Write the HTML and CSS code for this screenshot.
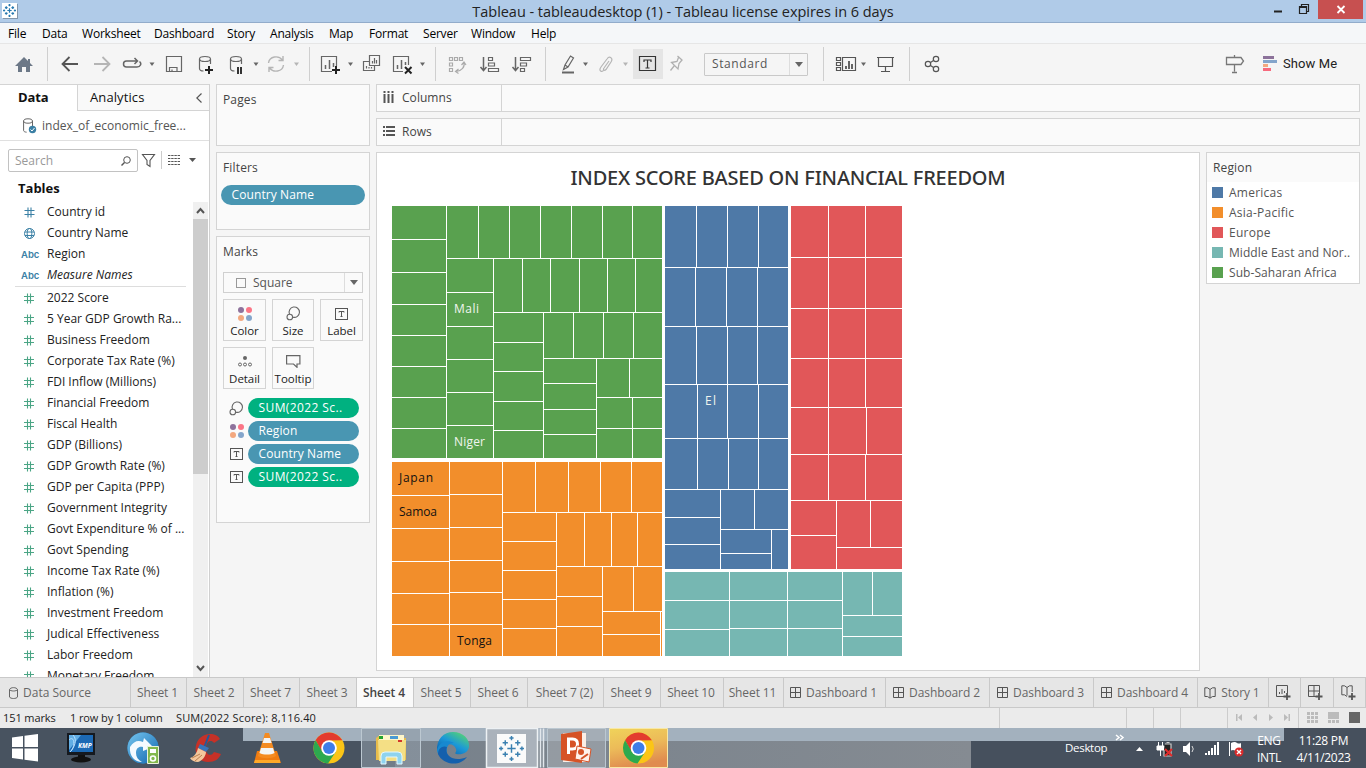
FILE: index.html
```html
<!DOCTYPE html>
<html lang="en">
<head>
<meta charset="utf-8">
<title>Tableau - tableaudesktop (1)</title>
<link rel="stylesheet" href="styles.css">
</head>
<body>
<svg class="defs" width="0" height="0">
  <defs>
    <symbol id="hash" viewBox="0 0 10 11"><path d="M3.5 .5v10M6.5 .5v10M0 3.5h10M0 7.5h10" fill="none" stroke="currentColor" stroke-width="1.1"/></symbol>
    <symbol id="dots" viewBox="0 0 14 14"><circle cx="3" cy="3" r="3" fill="#8e729c"/><circle cx="11" cy="3" r="3" fill="#fb7586"/><circle cx="3" cy="11" r="3" fill="#f3a87f"/><circle cx="11" cy="11" r="3" fill="#84a5cb"/></symbol>
    <symbol id="lasso" viewBox="0 0 15 15"><g fill="none" stroke="#666" stroke-width="1.1"><path d="M3.5 8.2A5.2 5.2 0 1 1 7 11.200"/><circle cx="3.800" cy="11" r="2.800"/></g></symbol>
    <symbol id="tbox" viewBox="0 0 13 12"><rect x=".5" y=".5" width="12" height="11" fill="none" stroke="#555"/><path d="M4 4.500V3.500h5v1M6.500 3.500v5M5.500 8.500h2" fill="none" stroke="#555"/></symbol>
    <symbol id="grid" viewBox="0 0 11 11"><path d="M.5 .5h10v10H.5zM5.500 .5v10M.5 5.500h10" fill="none" stroke="#555"/></symbol>
    <symbol id="book" viewBox="0 0 12 12"><path d="M6 2.500 3.500 .8H.8v8.700h2.700L6 11.200l2.500-1.700h2.700V.8H8.500L6 2.500v8.500" fill="none" stroke="#555"/></symbol>
    <symbol id="chrome" viewBox="0 0 32 32"><circle cx="16" cy="16" r="15.500" fill="#fbc516"/><path d="M2.600 8.200A15.500 15.500 0 0 1 29.400 8.300L16 8.400 9 20z" fill="#e33b2e"/><path d="M2.600 8.200A15.500 15.500 0 0 0 15 31.500L22.800 19.800 9.500 20z" fill="#2da94f"/><circle cx="16" cy="16" r="7.800" fill="#fff"/><circle cx="16" cy="16" r="6" fill="#3f7de8"/></symbol>
    <symbol id="tableau" viewBox="0 0 24 24"><path d="M12 8v8M8 12h8M12 0v4M10 2h4M12 20v4M10 22h4M2 10v4M0 12h4M22 10v4M20 12h4M6 4v5M3.500 6.500h5M18 4v5M15.500 6.500h5M6 15v5M3.500 17.500h5M18 15v5M15.500 17.500h5" fill="none" stroke="#3a80b0" stroke-width="1.400"/></symbol>
    <symbol id="tableau-small" viewBox="0 0 24 24"><path d="M12 8v8M8 12h8M12 0v4M10 2h4M12 20v4M10 22h4M2 10v4M0 12h4M22 10v4M20 12h4M6 4v5M3.500 6.500h5M18 4v5M15.500 6.500h5M6 15v5M3.500 17.500h5M18 15v5M15.500 17.500h5" fill="none" stroke="#2779b0" stroke-width="2.300"/></symbol>
  </defs>
</svg>
<div class="app">
  <header class="titlebar">
    <span class="app-icon"><svg width="13" height="13"><use href="#tableau-small"/></svg></span>
    <h1>Tableau - tableaudesktop (1) - Tableau license expires in 6 days</h1>
    <svg class="win-buttons" width="96" height="22" viewBox="1270 0 96 22"><path d="M1274 10.500h8v2h-8z" fill="#222"/><path d="M1299.500 6.500h7v7h-7zM1299 7.500h8M1301.500 6V4.500h7v7h-1.500" fill="none" stroke="#222" stroke-width="1.200"/><path d="M1318 0h45v19h-45z" fill="#c75050"/><path d="M1337.500 6l7 7M1344.500 6l-7 7" stroke="#fff" stroke-width="1.800"/></svg>
  </header>
  <nav class="menubar">
    <span style="width:34px">File</span><span style="width:40px">Data</span><span style="width:72px">Worksheet</span><span style="width:73px">Dashboard</span><span style="width:43px">Story</span><span style="width:59px">Analysis</span><span style="width:40px">Map</span><span style="width:54px">Format</span><span style="width:48px">Server</span><span style="width:60px">Window</span><span style="width:40px">Help</span>
  </nav>
  <div class="toolbar">
    <svg width="309" height="40" viewBox="0 44 309 40" fill="none" stroke="#666" stroke-width="1.200">
      <path d="M15 66l9-9 4 4v-2h2v4l3 3h-3v6h-4v-5h-4v5h-4v-6z" fill="#6c7887" stroke="none"/>
      <path d="M47.500 47v34" stroke="#cfcfcf" stroke-width="1"/>
      <path d="M69.500 57l-7 7 7 7M62.500 64H78" stroke="#555" stroke-width="1.800"/>
      <path d="M102.500 57l7 7-7 7M109.500 64H94" stroke="#b5b5b5" stroke-width="1.800"/>
      <path d="M128 67h-1.500a3 3 0 0 1 0-6h11M134.500 58l3 3-3 3M139.500 61.500c2.500 2 1 5.500-2.500 5.500h-9" stroke-width="1.500"/>
      <path d="M149.500 62.500h5L152 66z" fill="#666" stroke="none"/>
      <path d="M166.500 56.500h15v15h-15zM169.500 71v-3.500h7.500V71M172 69.500v2"/>
      <path d="M199.500 59v9.500c0 1.500 2 2.500 4 2.500M210.500 59v5"/><ellipse cx="205" cy="59" rx="5.500" ry="2.500"/>
      <path d="M209 66v8M205 70h8" stroke="#222" stroke-width="2"/>
      <path d="M230.500 59v9.500c0 1.500 2 2.500 4 2.500M241.500 59v5"/><ellipse cx="236" cy="59" rx="5.500" ry="2.500"/>
      <path d="M238 67v7M241 67v7" stroke="#333" stroke-width="2"/>
      <path d="M253.500 62.500h5L256 66z" fill="#666" stroke="none"/>
      <path d="M268.500 63c1-7 10-8 14-3M283.500 65c-1 7-10 8-14 3M283 56v4.500h-4.500M269 72v-4.500h4.500" stroke="#b5b5b5" stroke-width="1.400"/>
      <path d="M294 62.500h5l-2.500 3.500z" fill="#b5b5b5" stroke="none"/>
    </svg>
    <svg width="237" height="40" viewBox="309 44 237 40" fill="none" stroke="#666" stroke-width="1.200">
      <path d="M309.500 47v34M435.500 47v34M545.500 47v34" stroke="#cfcfcf" stroke-width="1"/>
      <path d="M332 71.500h-10.500v-15h15V66"/><path d="M325.500 65v4M329.500 60v9M333.500 63v4" stroke-width="1.500"/><path d="M336 66v8M332 70h8" stroke="#222" stroke-width="2"/>
      <path d="M348 62.500h5l-2.500 3.500z" fill="#666" stroke="none"/>
      <path d="M369.500 55.500h10v10h-10zM369 61.500h-5.500v9h11V66M372.500 61v2.500M374.500 58v5.500M376.500 60v3.500M366.500 66v2.500M369 67v1.500M371.500 67v1.500"/>
      <path d="M403 71.500h-9.500v-15h15V65"/><path d="M397.500 65v4M401.500 60v9M405.500 62v3" stroke-width="1.500"/><path d="M405 67l6.500 6.500M411.500 67l-6.500 6.500" stroke="#222" stroke-width="2"/>
      <path d="M420 62.500h5l-2.500 3.500z" fill="#666" stroke="none"/>
      <path d="M449.500 57.500h3v3h-3zM454.500 57.500h3v3h-3zM459.500 57.500h3v3h-3zM449.500 63h3v3h-3zM449.500 68.500h3v3h-3zM464 62c1 5-2 9-8 9.500M461.500 65l2.500-3 2 3M458.500 69l-3 2.500 3 2" stroke="#aaa"/>
      <path d="M483.500 57v13M480.500 67l3 3.500 3-3.500" stroke-width="1.500"/><path d="M488.500 57.500h4v3h-4zM488.500 63h6v3h-6zM488.500 68.500h10v3h-10z"/>
      <path d="M515.500 57v13M512.500 67l3 3.500 3-3.500" stroke-width="1.500"/><path d="M520.500 57.500h10v3h-10zM520.500 63h6v3h-6zM520.500 68.500h4v3h-4z"/>
    </svg>
    <svg width="87" height="40" viewBox="546 44 87 40" fill="none" stroke="#666" stroke-width="1.200">
      <path d="M563.500 69.500l1.500-4.500 5.500-9 3 2-5.500 9zM565 65l3 2"/><path d="M562 72.500h12" stroke-width="2"/>
      <path d="M583 62.500h5l-2.500 3.500z" fill="#666" stroke="none"/>
      <path d="M609 61l-5 7c-1.500 2 .5 3 2 1.500l5-7.500c2.500-4-1.500-6.500-4-3l-6 8c-3 4 1 5.500 3 3" stroke="#b5b5b5"/>
      <path d="M623 62.500h5l-2.500 3.500z" fill="#b5b5b5" stroke="none"/>
    </svg>
    <svg class="active-tool" width="30" height="30" viewBox="633 49 30 30"><path d="M639.500 56.500h16v14h-16z" fill="none" stroke="#333" stroke-width="1.200"/><path d="M644 62v-2h7v2M647.500 60v8M645.500 68h4" fill="none" stroke="#333" stroke-width="1.200"/></svg>
    <svg width="41" height="40" viewBox="663 44 41 40"><path d="M677.500 56l5 4.500M678.500 57.500l-1.500 4-5.500 1 6.500 6.500 1-5.500 3-3.500M674.500 65.500l-4 5" fill="none" stroke="#b0b0b0" stroke-width="1.300"/></svg>
    <div class="fit-select"><span>Standard</span><i><svg width="8" height="5"><path d="M0 0h8L4 5z" fill="#666"/></svg></i></div>
    <svg width="152" height="40" viewBox="808 44 152 40" fill="none" stroke="#555" stroke-width="1.200">
      <path d="M823.500 47v34M909.500 47v34" stroke="#cfcfcf" stroke-width="1"/>
      <path d="M836.500 57.500h4v3h-4zM836.500 62.500h4v3h-4zM836.500 67.500h4v3h-4zM842.500 57.500h13v13h-13z"/><path d="M846 66v3M849 61v8M852 64v5" stroke-width="1.800"/>
      <path d="M861 62.500h5l-2.500 3.500z" fill="#666" stroke="none"/>
      <path d="M877 57.500h17M878.500 58v8.500h14V58M885.500 66.500v5M881 71.500h9"/>
      <path d="M930.500 62.500l3-2M930.500 65.500l3 2"/><circle cx="928" cy="64" r="2.700"/><circle cx="936" cy="59" r="2.700"/><circle cx="936" cy="69" r="2.700"/>
    </svg>
    <div class="show-me">
      <svg width="58" height="40" viewBox="1222 44 58 40"><path d="M1226.500 57.500h14.500l2.500 3.500-2.500 3.500h-14.500zM1234.500 55v2.500M1234.500 64.500v7M1232 72.500h5" fill="none" stroke="#777" stroke-width="1.300"/><path d="M1263 56h11v3h-11z" fill="#8c729a"/><path d="M1263 60h14v3h-14z" fill="#84a5cb"/><path d="M1263 64h5v3h-5z" fill="#f3a87f"/><path d="M1263 68h8v3h-8z" fill="#f76a7d"/></svg>
      <span>Show Me</span>
    </div>
  </div>

  <main class="workspace">
    <aside class="data-pane">
      <div class="pane-tabs"><b>Data</b><span class="analytics">Analytics<svg width="6" height="10"><path d="M5.500 .5L.8 5l4.700 4.500" fill="none" stroke="#555" stroke-width="1.200"/></svg></span></div>
      <div class="source"><svg width="14" height="16" viewBox="0 0 14 16"><path d="M.6 3v9.500c0 1 1.500 1.600 3 1.700M9.500 3v5" fill="none" stroke="#666"/><ellipse cx="5" cy="3" rx="4.400" ry="2.200" fill="none" stroke="#666"/><circle cx="9.500" cy="11.500" r="3.700" fill="#3b80a5"/><path d="M7.500 11.500l1.500 1.500 2.500-3" stroke="#fff" fill="none"/></svg><span>index_of_economic_free...</span></div>
      <div class="search-row"><div class="search">Search<svg width="10" height="10"><circle cx="6" cy="4" r="3.300" fill="none" stroke="#555"/><path d="M3.500 6.500L.5 9.500" stroke="#555" stroke-width="1.400"/></svg></div>
        <svg width="62" height="22" viewBox="138 149 62 22"><path d="M142.500 154.500h12l-4.500 6v6l-3-2v-4z" fill="none" stroke="#555" stroke-width="1.100"/><path d="M161.500 151v18" stroke="#ccc"/><path d="M168 155.500h12M168 158.500h12M168 161.500h12M168 164.500h12" stroke="#555" stroke-width="1" stroke-dasharray="2.400 .8"/><path d="M189 158h7l-3.500 4z" fill="#555"/></svg></div>
      <h2>Tables</h2>
      <div class="field-area">
        <ul class="fields">
          <li class="dim"><svg width="10" height="11"><use href="#hash"/></svg>Country id</li>
          <li class="dim"><svg width="11" height="11" viewBox="0 0 11 11" fill="none" stroke="currentColor"><circle cx="5.500" cy="5.500" r="5"/><ellipse cx="5.500" cy="5.500" rx="2.300" ry="5"/><path d="M1 4h9M1 7.500h9"/></svg>Country Name</li>
          <li class="dim"><em class="abc">Abc</em>Region</li>
          <li class="dim last"><em class="abc">Abc</em><i>Measure Names</i></li>
          <li><svg width="10" height="11"><use href="#hash"/></svg>2022 Score</li>
          <li><svg width="10" height="11"><use href="#hash"/></svg>5 Year GDP Growth Ra...</li>
          <li><svg width="10" height="11"><use href="#hash"/></svg>Business Freedom</li>
          <li><svg width="10" height="11"><use href="#hash"/></svg>Corporate Tax Rate (%)</li>
          <li><svg width="10" height="11"><use href="#hash"/></svg>FDI Inflow (Millions)</li>
          <li><svg width="10" height="11"><use href="#hash"/></svg>Financial Freedom</li>
          <li><svg width="10" height="11"><use href="#hash"/></svg>Fiscal Health</li>
          <li><svg width="10" height="11"><use href="#hash"/></svg>GDP (Billions)</li>
          <li><svg width="10" height="11"><use href="#hash"/></svg>GDP Growth Rate (%)</li>
          <li><svg width="10" height="11"><use href="#hash"/></svg>GDP per Capita (PPP)</li>
          <li><svg width="10" height="11"><use href="#hash"/></svg>Government Integrity</li>
          <li><svg width="10" height="11"><use href="#hash"/></svg>Govt Expenditure % of ...</li>
          <li><svg width="10" height="11"><use href="#hash"/></svg>Govt Spending</li>
          <li><svg width="10" height="11"><use href="#hash"/></svg>Income Tax Rate (%)</li>
          <li><svg width="10" height="11"><use href="#hash"/></svg>Inflation (%)</li>
          <li><svg width="10" height="11"><use href="#hash"/></svg>Investment Freedom</li>
          <li><svg width="10" height="11"><use href="#hash"/></svg>Judical Effectiveness</li>
          <li><svg width="10" height="11"><use href="#hash"/></svg>Labor Freedom</li>
          <li><svg width="10" height="11"><use href="#hash"/></svg>Monetary Freedom</li>
        </ul>
        <div class="scrollbar"><svg width="15" height="17"><path d="M4 11l3.500-4L11 11" fill="none" stroke="#555" stroke-width="2"/></svg><div class="thumb"></div><svg width="15" height="17"><path d="M4 6l3.500 4L11 6" fill="none" stroke="#555" stroke-width="2"/></svg></div>
      </div>
    </aside>

    <section class="cards">
      <div class="card pages"><h3>Pages</h3></div>
      <div class="card filters"><h3>Filters</h3><span class="pill blue">Country Name</span></div>
      <div class="card marks"><h3>Marks</h3>
        <div class="mark-type"><span class="sq"></span><span>Square</span><i><svg width="8" height="5"><path d="M0 0h8L4 5z" fill="#666"/></svg></i></div>
        <div class="mark-buttons">
          <div><svg width="14" height="14"><use href="#dots"/></svg>Color</div>
          <div><svg width="15" height="15"><use href="#lasso"/></svg>Size</div>
          <div><svg width="13" height="12"><use href="#tbox"/></svg>Label</div>
          <div><svg width="14" height="11" viewBox="0 0 14 11"><circle cx="7" cy="2" r="2" fill="#666"/><g fill="none" stroke="#666"><circle cx="2" cy="8.500" r="1.500"/><circle cx="7" cy="8.500" r="1.500"/><circle cx="12" cy="8.500" r="1.500"/></g></svg>Detail</div>
          <div><svg width="15" height="13" viewBox="0 0 15 13"><path d="M.6 .6h13.300v8.400h-2.900v3.300L7.500 9H.6z" fill="none" stroke="#666" stroke-width="1.200"/></svg>Tooltip</div>
        </div>
        <div class="encodings">
          <div><svg width="15" height="15"><use href="#lasso"/></svg><span class="pill green">SUM(2022 Sc..</span></div>
          <div><svg width="14" height="14"><use href="#dots"/></svg><span class="pill blue">Region</span></div>
          <div><svg width="13" height="12"><use href="#tbox"/></svg><span class="pill blue">Country Name</span></div>
          <div><svg width="13" height="12"><use href="#tbox"/></svg><span class="pill green">SUM(2022 Sc..</span></div>
        </div>
      </div>
    </section>

    <section class="view">
      <div class="shelf"><span><svg width="12" height="12" viewBox="0 0 12 12"><path d="M1.500 0v2M5.500 0v2M9.500 0v2M1.500 3v9M5.500 3v9M9.500 3v9" stroke="#555" stroke-width="2"/></svg>Columns</span></div>
      <div class="shelf"><span><svg width="12" height="12" viewBox="0 0 12 12"><path d="M0 2h2M0 6h2M0 10h2M3 2h9M3 6h9M3 10h9" stroke="#555" stroke-width="2"/></svg>Rows</span></div>
      <div class="view-row">
        <div class="sheet">
          <h2>INDEX SCORE BASED ON FINANCIAL FREEDOM</h2>
          <svg class="treemap" width="511" height="451" viewBox="392 206 511 451">
            <path d="M392 206h270v252H392z" fill="#59a14f"/>
            <path d="M392 462h270v194H392z" fill="#f28e2b"/>
            <path d="M665 206h123v363H665z" fill="#4e79a7"/>
            <path d="M791 206h111v363H791z" fill="#e15759"/>
            <path d="M665 572h237v84H665z" fill="#76b7b2"/>
            <g transform="translate(.5 .5)" stroke="#fff" stroke-width="1" fill="none" shape-rendering="crispEdges">
              <path d="M446 205V458M391 239H446M391 272H446M391 304H446M391 335H446M391 366H446M391 397H446M391 428H446
                M446 258H662M478 205V258M509 205V258M540 205V258M571 205V258M602 205V258M632 205V258
                M493 258V458M446 292H493M446 326H493M446 359H493M446 392H493M446 425H493
                M493 312H662M522 258V312M550 258V312M579 258V312M607 258V312M635 258V312
                M543 312V458M493 342H543M493 371H543M493 401H543M493 430H543
                M543 358H662M573 312V358M603 312V358M633 312V358
                M596 358V458M543 383H596M543 409H596M543 434H596M596 397H662M629 358V397M632 397V458M596 428H662"/>
              <path d="M449 461V656M391 495H449M391 528H449M391 561H449M391 593H449M391 624H449
                M502 461V656M449 494H502M449 527H502M449 560H502M449 592H502M449 624H502
                M502 512H662M535 461V512M568 461V512M600 461V512M631 461V512
                M556 512V656M502 541H556M502 570H556M502 599H556M502 628H556
                M556 566H662M584 512V566M611 512V566M637 512V566
                M602 566V656M556 596H602M556 626H602M602 611H662M633 566V611M602 634H660M660 611V656"/>
              <path d="M664 267H788M664 326H788M664 384H788M664 438H788M664 489H788
                M696 205V267M727 205V267M758 205V267M695 267V326M726 267V326M757 267V326M696 326V384M727 326V384M757 326V384
                M697 384V438M727 384V438M758 384V438M697 438V489M728 438V489M758 438V489
                M720 489V569M664 517H720M664 544H720M720 529H788M754 489V529M771 529V569M720 553H771"/>
              <path d="M790 257H902M790 308H902M790 358H902M790 407H902M790 454H902M790 500H902M828 205V500
                M865 205V407M866 407V454M865 454V500M836 500V569M790 535H836M836 547H902M870 500V547"/>
              <path d="M729 571V656M787 571V656M842 571V656M664 600H842M664 629H729M729 628H842M842 615H902M872 571V615M842 636H902"/>
            </g>
            <g class="mark-label" fill="#f0f5ee"><text x="454" y="313" textLength="25">Mali</text><text x="454" y="446" textLength="31">Niger</text><text x="705" y="405" textLength="11">El</text></g>
            <g class="mark-label" fill="#111"><text x="399" y="482" textLength="34">Japan</text><text x="399" y="516" textLength="38">Samoa</text><text x="457" y="645" textLength="35">Tonga</text></g>
          </svg>
        </div>
        <div class="legend"><h3>Region</h3>
          <ul><li><i class="americas"></i>Americas</li><li><i class="asia"></i>Asia-Pacific</li><li><i class="europe"></i>Europe</li><li class="tight"><i class="mena"></i>Middle East and Nor..</li><li class="tight"><i class="africa"></i>Sub-Saharan Africa</li></ul>
        </div>
      </div>
    </section>
  </main>

  <nav class="sheet-tabs">
    <span class="source-tab" style="width:131px"><svg width="9" height="12" viewBox="0 0 9 12"><path d="M.5 2.500v7.500c1 2 7 2 8 0V2.500M.5 2.500c1-2.500 7-2.500 8 0-1 2-7 2-8 0" fill="none" stroke="#666"/></svg>Data Source</span><span style="width:56px">Sheet 1</span><span style="width:57px">Sheet 2</span><span style="width:56px">Sheet 7</span><span style="width:57px">Sheet 3</span><span class="active" style="width:57px">Sheet 4</span><span style="width:57px">Sheet 5</span><span style="width:57px">Sheet 6</span><span style="width:76px">Sheet 7 (2)</span><span style="width:57px">Sheet 9</span><span style="width:63px">Sheet 10</span><span style="width:60px">Sheet 11</span><span style="width:102px"><svg width="11" height="11"><use href="#grid"/></svg>Dashboard 1</span><span style="width:104px"><svg width="11" height="11"><use href="#grid"/></svg>Dashboard 2</span><span style="width:104px"><svg width="11" height="11"><use href="#grid"/></svg>Dashboard 3</span><span style="width:104px"><svg width="11" height="11"><use href="#grid"/></svg>Dashboard 4</span><span style="width:71px"><svg width="12" height="12"><use href="#book"/></svg>Story 1</span><span class="new" style="width:32px"><svg width="16" height="16" fill="none" stroke="#555"><path d="M9 11.500H.5V.5h11V8M3.500 7v2M6 4v5M8.500 6v2"/><path d="M11 8v7M7.500 11.500h7" stroke-width="1.800"/></svg></span><span class="new" style="width:33px"><svg width="16" height="16" fill="none" stroke="#555"><path d="M8 11.500H.5V.5h11V8M6 .5v11M.5 6h11"/><path d="M11 8v7M7.500 11.500h7" stroke-width="1.800"/></svg></span><span class="new" style="width:32px"><svg width="16" height="16" fill="none" stroke="#555"><path d="M6 2.500L3.500 .8H.8v9h2.700L6 11.500M6 2.500v8M6 2.500L8.500 .8h2.700V7"/><path d="M11 8v7M7.500 11.500h7" stroke-width="1.800"/></svg></span>
  </nav>
  <footer class="status"><span style="width:67px">151 marks</span><span style="width:106px">1 row by 1 column</span><span class="sum">SUM(2022 Score): 8,116.40</span>
    <svg width="368" height="20" viewBox="998 708 368 20"><path d="M999.500 708v20M1126.500 708v20M1153.500 708v20M1180.500 708v20M1227.500 708v20M1298.500 708v20" stroke="#ccc"/><path d="M1236 714h1.500v7H1236zM1242 714v7l-4-3.500zM1257 714v7l-4-3.500zM1269 714v7l4-3.500zM1284 714v7l4-3.500zM1288.500 714h1.500v7h-1.500z" fill="#bbb"/><path d="M1307 712h3v3h-3zM1311 712h3v3h-3zM1315 712h3v3h-3zM1307 716h3v3h-3zM1311 716h3v3h-3zM1315 716h3v3h-3zM1307 720h3v3h-3zM1311 720h3v3h-3zM1315 720h3v3h-3zM1328 712h11v7h-11zM1328 720h3v3h-3zM1332 720h3v3h-3zM1336 720h3v3h-3z" fill="#bbb"/><path d="M1349 712h11v11h-11z" fill="#666"/></svg>
  </footer>

  <div class="taskbar">
    <svg class="task-icons" width="669" height="40" viewBox="0 728 669 40">
      <defs>
        <linearGradient id="gold" x2=".3" y2="1"><stop stop-color="#f0d35a"/><stop offset=".5" stop-color="#ecbb59"/><stop offset="1" stop-color="#e08c4f"/></linearGradient>
        <linearGradient id="edge" x1=".1" y1="1" x2=".9" y2="0"><stop stop-color="#0c5ba8"/><stop offset=".5" stop-color="#1b98d8"/><stop offset="1" stop-color="#5edb66"/></linearGradient>
        <linearGradient id="arr" x2="1" y2="1"><stop stop-color="#76c5ee"/><stop offset="1" stop-color="#1167b0"/></linearGradient>
      </defs>
      <path d="M12 737.500l11-1.500v11H12zM24.500 735.800L38 734v13H24.500zM12 748.500h11v11L12 758zM24.500 748.500H38v13l-13.500-1.800z" fill="#fff"/>
      <path d="M67 733h28v22H67z" fill="#15191f"/><path d="M69 735h24v17H69z" fill="#1c69b4"/><path d="M69 735l12 0-12 15z" fill="#62aee5"/><path d="M69 740c5-5 7 5 2 11M73 735c5 5 1 13-3 17" stroke="#b8e1ff" fill="none"/><text x="78" y="748" class="kmp" fill="#fff">KMP</text><path d="M78 755h7v3h-7z" fill="#111"/><ellipse cx="81" cy="759.500" rx="10" ry="3" fill="#111"/>
      <circle cx="143" cy="748" r="15.500" fill="#2b8acb"/><circle cx="143" cy="748" r="15.500" fill="url(#arr)"/><path d="M130 747c4-6 8-7 13-5l1-4 9 9-10 4 0-4c-4-1-7 1-7 6 0 4 2 7 6 9-7 0-13-6-12-15z" fill="#f5faff"/><path d="M147.500 746.500h11v17h-11z" fill="#82b84d" stroke="#e9f3da"/><path d="M150 749h6v4h-6z" fill="#fff"/><circle cx="153" cy="758.500" r="2.500" fill="#82b84d" stroke="#fff" stroke-width="1.600"/>
      <path d="M220 739c-3-6-14-7-20-1-8 8-5 24 8 24 7 0 11-3 13-8l-7-2c-3 5-8 3-8-3 0-8 5-10 8-6z" fill="#c63127"/><path d="M209 735l-5 13" stroke="#235a9a" stroke-width="2"/><path d="M200 744l9 4-3 4-8-4z" fill="#3975ba"/><path d="M198 748l8 4c0 4-4 9-8 10-4 0-7-2-8-4 4-1 7-5 8-10z" fill="#f4c79c"/><path d="M192 758l8-4M195 761l7-6" stroke="#b98050"/>
      <path d="M257 751h20l4 12h-27z" fill="#f07c11"/><path d="M255 760h25v3h-26z" fill="#ffa928"/><path d="M265 733h4l7 23c-5 3-13 3-18 0z" fill="#f58b21"/><path d="M264 738h6l1.600 5h-9zM261 748h12l1.500 5c-4 2-11 2-15 0z" fill="#f5f5f5"/>
      <svg x="313" y="732" width="32" height="32"><use href="#chrome"/></svg>
      <path d="M361.500 728.500h59v39h-59z" fill="#8d99a5" fill-opacity=".6" stroke="#bcc8d1"/>
      <path d="M376 738l4-3h8l2 3h16v22h-30z" fill="#e8bd4c"/><path d="M379 735h25v20h-25z" fill="#fff6c9"/><path d="M378 740h28l-1 21h-26z" fill="#f4df85"/><path d="M379 736h4v3h-4z" fill="#22a32e"/><path d="M390 736h8v3h-8z" fill="#4b9bd3"/><path d="M398 740h4v2h-4z" fill="#d3352b"/><path d="M381 764v-8q0-4 4-4h13q4 0 4 4v8h-5v-7h-11v7z" fill="#8fd3ef" stroke="#e3f8ff"/>
      <path d="M437 751c-1-12 7-19 16-19 10 0 17 7 16 15-1 6-7 8-13 7-2-1 1-2 0-5-2-6-11-7-19 2z" fill="url(#edge)"/><path d="M437 750c2-8 10-11 17-7-8-1-10 11-3 16-9 0-14-4-14-9z" fill="#1789d0"/><path d="M447 747c-3 8 6 16 20 10-8 11-25 7-29-3 0-6 5-9 9-7z" fill="#1460ad"/>
      <path d="M486.500 728.500h51v39h-51z" fill="#aab2bb" stroke="#edf1f4" stroke-width="1.500"/><path d="M540.500 728.500v39M543.500 728.500v39" stroke="#e2e7ec" stroke-width="1.500"/><path d="M497 734h29v29h-29z" fill="#fafafa"/><svg x="499" y="736" width="25" height="25"><use href="#tableau"/></svg>
      <path d="M547.500 728.500h58v39h-58z" fill="#a5aab1" fill-opacity=".6" stroke="#bcc8d1"/><path d="M563 733h23v29h-23z" fill="#fbeee6"/><path d="M561 734l21-3v32l-21-3z" fill="#d65327"/><path d="M568.500 754v-15h4q5 0 5 5t-5 5h-4" fill="none" stroke="#fff" stroke-width="3"/><path d="M577 746l14 3-2 13-14-3z" fill="#fff2eb" stroke="#d65327"/><circle cx="581" cy="752" r="3" fill="#d65327"/><path d="M581 759l7-5" stroke="#d65327" stroke-width="2"/>
      <path d="M609.500 728.500h58v39h-58z" fill="url(#gold)" stroke="#f8e9a5"/><svg x="622.500" y="732" width="32" height="32"><use href="#chrome"/></svg>
    </svg>
    <span class="desktop">Desktop</span>
    <svg class="tray" width="144" height="40" viewBox="1110 728 144 40"><path d="M1116 735l3 2.500-3 2.500M1120 735l3 2.500-3 2.500" fill="none" stroke="#fff" stroke-width="1.500"/><path d="M1136 751l3.500-4 3.500 4z" fill="#fff"/><path d="M1158.500 742v4M1162.500 742v4M1157 746h7v4h-7zM1160.500 750v6" fill="#fff" stroke="#fff"/><path d="M1165 744h6v12h-7v-6M1166.500 742.500h3" fill="#222" stroke="#ccc" stroke-width="1.200"/><path d="M1165 749l7 7M1172 749l-7 7" stroke="#df2c2c" stroke-width="2.200"/><path d="M1183 746h3l4-4v14l-4-4h-3z" fill="#fff"/><path d="M1192 746q2.500 3 0 6" fill="none" stroke="#ddd"/><path d="M1205 753h2v2h-2zM1208 751h2v4h-2zM1211 748h2v7h-2zM1214 745h2v10h-2zM1217 742h2v13h-2z" fill="#fff"/><path d="M1229.500 742v14" stroke="#fff"/><path d="M1231 743q4-2 6 0 2 1 4 0v8q-4 1-6-.5-2-1-4 0z" fill="#fff"/><circle cx="1239" cy="752" r="4.500" fill="#d92b2b"/><path d="M1237 750l4 4M1241 750l-4 4" stroke="#fff" stroke-width="1.400"/></svg>
    <div class="lang">ENG<br>INTL</div><div class="clock">11:28 PM<br>4/11/2023</div>
  </div>
</div>
</body>
</html>
```
FILE: styles.css
```css
* { box-sizing: border-box; }
body { margin: 0; width: 1366px; height: 768px; overflow: hidden; background: #f5f5f5; font-family: "Open Sans", "Noto Sans", sans-serif; font-size: 12px; color: #333; }
svg { display: block; flex: none; }
.defs { position: absolute; }
h1, h2, h3, ul { margin: 0; padding: 0; font-weight: 400; list-style: none; }
.app { display: flex; flex-direction: column; width: 1366px; height: 768px; white-space: nowrap; }

.titlebar { display: flex; align-items: flex-start; height: 23px; background: #b0cbe8; border-bottom: 1px solid #92accb; }
.app-icon { width: 15px; height: 15px; margin: 3px 0 0 2px; padding: 1px; background: #fff; box-shadow: 1px 1px 0 #8296ab; }
.titlebar h1 { flex: 1; padding-left: 79px; text-align: center; font-size: 14.5px; line-height: 23px; color: #222; letter-spacing: -.04px; }
.menubar { display: flex; height: 21px; padding-left: 8px; border-bottom: 1px solid #e6e6e6; background: #f5f7f9; color: #000; font-size: 12px; line-height: 21px; letter-spacing: -.2px; }

.toolbar { display: flex; height: 40px; align-items: center; }
.active-tool { background: #e5e5e5; }
.fit-select { display: flex; width: 104px; height: 23px; border: 1px solid #c9c9c9; border-radius: 1px; line-height: 20px; color: #555; letter-spacing: .6px; }
.fit-select span { flex: 1; padding-left: 7px; }
.fit-select i { display: flex; width: 18px; border-left: 1px solid #ddd; align-items: center; justify-content: center; }
.show-me { display: flex; margin-left: 262px; align-items: center; color: #222; font-size: 13px; font-family: Roboto, sans-serif; letter-spacing: .1px; }
.show-me span { padding: 0 0 2px 3px; }

.workspace { display: flex; height: 593px; overflow: hidden; }
.data-pane { display: flex; flex-direction: column; width: 210px; background: #fff; border-top: 1px solid #d4d4d4; border-right: 1px solid #d0d0d0; }
.pane-tabs { display: flex; height: 26px; font-size: 13px; line-height: 25px; color: #111; }
.pane-tabs b { width: 77px; padding-left: 18px; letter-spacing: -.1px; }
.analytics { display: flex; flex: 1; padding: 0 7px 0 12px; justify-content: space-between; align-items: center; background: #f9f9f9; border-left: 1px solid #d4d4d4; border-bottom: 1px solid #d4d4d4; letter-spacing: .1px; }
.source { display: flex; height: 30px; padding-left: 23px; align-items: center; gap: 5px; border-bottom: 1px solid #e0e0e0; color: #555; }
.search-row { display: flex; padding: 8px 0 0 8px; }
.search { display: flex; width: 130px; height: 23px; padding: 0 6px; justify-content: space-between; align-items: center; border: 1px solid #c2c2c2; border-radius: 2px; color: #999; }
.data-pane h2 { height: 30px; padding-left: 18px; font-size: 13px; line-height: 33px; font-weight: 700; color: #111; }
.field-area { display: flex; flex: 1; min-height: 0; justify-content: space-between; }
.fields { width: 190px; margin-top: -1px; padding-left: 15px; overflow: hidden; }
.fields li { display: flex; height: 21px; align-items: center; font-size: 12px; color: #222; }
.fields li > svg { margin: 1px 13px 0 9px; color: #4ba585; }
.fields li.dim > svg { width: 11px; margin-right: 12px; color: #3b80a5; }
.abc { width: 32px; padding: 2px 0 0 6px; font: 600 9.5px Inter, sans-serif; color: #3b80a5; }
.fields .last { height: 23px; padding-bottom: 1px; border-bottom: 1px solid #ddd; width: 171px; }
.scrollbar { display: flex; flex-direction: column; width: 15px; margin-right: 1px; background: #f0f0f0; }
.scrollbar .thumb { height: 255px; background: #cdcdcd; margin-bottom: auto; }

.cards { display: flex; flex-direction: column; width: 154px; margin-left: 6px; gap: 6px; }
.card { background: #fafafa; border: 1px solid #d4d4d4; }
.card h3, .legend h3 { height: 31px; padding-left: 6px; color: #444; font-size: 12px; line-height: 29px; letter-spacing: .15px; }
.pages { height: 62px; }
.filters { height: 78px; }
.marks { height: 287px; }
.pill { display: block; height: 20px; padding-left: 10.5px; border-radius: 10px; color: #fff; line-height: 19px; font-weight: 500; letter-spacing: .1px; }
.green.pill { letter-spacing: .4px; }
.filters .pill { width: 144px; margin: 1px 0 0 4px; }
.blue { background: #4996b2; }
.green { background: #00b180; }
.mark-type { display: flex; width: 140px; height: 21px; margin: 4px 0 6px 6px; align-items: center; border: 1px solid #d0d0d0; color: #555; }
.sq { width: 10px; height: 10px; margin: 0 7px 0 12px; border: 1px solid #999; }
.mark-type i { display: flex; width: 18px; height: 19px; margin-left: auto; align-items: center; justify-content: center; border-left: 1px solid #ddd; }
.mark-buttons { display: grid; grid-template-columns: 43px 42px 43px; grid-auto-rows: 42px; gap: 6px; margin-left: 6px; }
.mark-buttons div { display: grid; grid-template-rows: 24px 14px; justify-items: center; align-items: center; border: 1px solid #d4d4d4; line-height: 14px; font-size: 11.5px; color: #222; letter-spacing: -.05px; }
.mark-buttons svg { margin-top: 3px; }
.encodings { display: grid; gap: 3px; margin: 9px 0 0 12px; }
.encodings div { display: grid; grid-template-columns: 15px 111px; gap: 4px; align-items: center; justify-items: center; }
.encodings .pill { width: 111px; }

.view { width: 984px; margin-left: 6px; }
.shelf { height: 28px; margin-bottom: 6px; background: #fafafa; border: 1px solid #d4d4d4; color: #444; }
.shelf span { display: flex; width: 125px; height: 26px; padding: 0 0 2px 6px; gap: 7px; align-items: center; border-right: 1px solid #d4d4d4; letter-spacing: .05px; }
.view-row { display: flex; justify-content: space-between; align-items: flex-start; }
.sheet { width: 824px; height: 519px; background: #fff; border: 1px solid #d4d4d4; }
.sheet h2 { height: 53px; line-height: 50px; text-align: center; font-size: 20px; font-weight: 500; color: #333; font-family: "Noto Sans", sans-serif; letter-spacing: -.21px; }
.treemap { margin-left: 15px; }
.mark-label { font-size: 12px; }
.legend { width: 154px; height: 132px; background: #fff; border: 1px solid #d4d4d4; letter-spacing: .25px; }
.legend h3 { height: 29px; background: #fafafa; line-height: 29px; }
.legend li { display: flex; height: 20px; padding-left: 5px; gap: 6px; align-items: center; color: #555; }
.legend .tight { letter-spacing: .07px; }
.legend i { width: 11px; height: 11px; }
.americas { background: #4e79a7; } .asia { background: #f28e2b; } .europe { background: #e15759; } .mena { background: #76b7b2; } .africa { background: #59a14f; }

.sheet-tabs { display: flex; height: 31px; border-top: 1px solid #c9c9c9; border-bottom: 1px solid #c9c9c9; background: #e6e6e6; color: #666; }
.sheet-tabs span { display: flex; flex: none; gap: 5px; align-items: center; justify-content: center; padding-right: 2px; border-right: 1px solid #c9c9c9; font-size: 12px; letter-spacing: -.1px; }
.sheet-tabs .source-tab { justify-content: flex-start; padding-left: 9px; letter-spacing: 0; }
.sheet-tabs .active { background: #fafafa; color: #444; font-weight: 600; }
.status { display: flex; height: 20px; padding-left: 3px; background: #ebebeb; color: #222; font-size: 11px; line-height: 20px; letter-spacing: -.1px; }
.status .sum { letter-spacing: .15px; }
.status svg { margin-left: auto; }

.taskbar { display: flex; height: 40px; color: #fff; font-size: 12px; background: linear-gradient(90deg, transparent 243px, #a3b1be 243px 1284px, transparent 1284px) 0 0 / 1366px 13px no-repeat, linear-gradient(90deg, #485360 395px, #77818b 395px, #858b92 971px, #46505d 971px); }
.kmp { font: italic 700 6.5px "Open Sans", sans-serif; }
.desktop { margin-left: 396px; line-height: 40px; width: 45px; font-size: 11.5px; letter-spacing: -.3px; }
.lang, .clock { padding-top: 4px; line-height: 17px; text-align: center; font-size: 12px; letter-spacing: -.3px; }
.lang { width: 30px; }
.clock { width: 79px; }
```
